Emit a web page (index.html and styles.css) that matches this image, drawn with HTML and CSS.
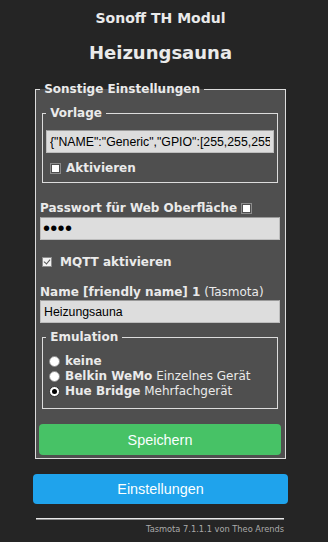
FILE: index.html
```html
<!DOCTYPE html>
<html lang="de">
<head>
    <meta charset="UTF-8">
    <meta name="viewport" content="width=device-width, initial-scale=1.0">
    <title>Sonoff TH Modul - Sonstige Einstellungen</title>
    <link rel="stylesheet" href="styles.css">
</head>
<body>
    <div class="page">
        <div class="head">
            <h3>Sonoff TH Modul</h3>
            <h2>Heizungsauna</h2>
        </div>

        <fieldset class="box">
            <legend>&nbsp;Sonstige Einstellungen&nbsp;</legend>
            <form class="form" action="co" method="get">
                <!-- Vorlage -->
                <fieldset class="sub sub-tpl">
                    <legend>&nbsp;Vorlage&nbsp;</legend>
                    <input class="field tpl-field" name="t1" placeholder="Vorlage" value='{"NAME":"Generic","GPIO":[255,255,255,255,255,255,255,255,255,255,255,255,255],"FLAG":1,"BASE":18}'>
                    <label class="row row-tpl"><input type="checkbox" class="cb"><b>Aktivieren</b></label>
                </fieldset>

                <div class="row row-pw"><b>Passwort für Web Oberfläche</b><input type="checkbox" class="cb cb-pw"></div>
                <input class="field pw-field" type="password" name="wp" value="1234">

                <label class="row row-mqtt"><input type="checkbox" class="cb cb-mqtt" checked><b>MQTT aktivieren</b></label>

                <div class="row row-name"><b>Name [friendly name] 1</b>&nbsp;(Tasmota)</div>
                <input class="field" name="a0" value="Heizungsauna">

                <!-- Emulation -->
                <fieldset class="sub sub-emu">
                    <legend>&nbsp;Emulation&nbsp;</legend>
                    <div class="radios">
                        <label class="radio"><input type="radio" name="b2" value="0" class="rb"><b>keine</b></label>
                        <label class="radio"><input type="radio" name="b2" value="1" class="rb"><b>Belkin WeMo</b>&nbsp;Einzelnes Gerät</label>
                        <label class="radio"><input type="radio" name="b2" value="2" class="rb" checked><b>Hue Bridge</b>&nbsp;Mehrfachgerät</label>
                    </div>
                </fieldset>

                <button type="submit" class="button bgrn">Speichern</button>
            </form>
        </fieldset>

        <button class="button main-btn">Einstellungen</button>

        <div class="footer">
            <hr>
            <a href="#">Tasmota 7.1.1.1 von Theo Arends</a>
        </div>
    </div>
</body>
</html>
```

FILE: styles.css
```css
* {
    box-sizing: border-box;
}

body {
    margin: 0;
    background: #252525;
    color: #eaeaea;
    font-family: "DejaVu Sans", Verdana, sans-serif;
    font-size: 12px;
}

.page {
    width: 255px;
    margin-left: 33px;
    padding-top: 10px;
}

.head {
    text-align: center;
}

.head h3 {
    margin: 0;
    font-size: 14px;
    line-height: 16px;
}

.head h2 {
    margin: 16px 0 0;
    font-size: 18px;
    line-height: 22px;
}

/* fieldsets */
.box {
    margin: 17px 2px 0;
    padding: 0 5px 3px 4px;
    border: 1px solid #dcdcdc;
    background: #4f4f4f;
    min-width: 0;
}

legend {
    padding: 0;
    font-weight: bold;
    line-height: 16px;
}

.form {
    display: flex;
    flex-direction: column;
    margin: 0;
}

.sub {
    margin: 0 2px;
    padding: 0 3px 6px;
    border: 1px solid #dcdcdc;
    min-width: 0;
}

.sub-tpl {
    margin-top: 8px;
}

.sub-emu {
    margin-top: 6px;
    padding-bottom: 9px;
}

/* inputs */
.field {
    display: block;
    width: 100%;
    height: 23px;
    margin: 0;
    padding: 0 3px;
    border: 1px solid #bdbdbd;
    border-top-color: #9a9a9a;
    background: #dddddd;
    color: #000;
    font-family: "Liberation Sans", Arial, sans-serif;
    font-size: 12.3px;
    outline: none;
}

.tpl-field {
    margin-top: 9px;
}

.pw-field {
    margin-top: 1px;
    padding-left: 2px;
    font-size: 20px;
    letter-spacing: 0.3px;
}

.row {
    display: flex;
    align-items: center;
    line-height: 16px;
    height: 16px;
    white-space: nowrap;
}

.row-tpl {
    margin-top: 7px;
}

.row-pw {
    margin-top: 17px;
}

.row-mqtt {
    margin-top: 14px;
}

.row-name {
    margin-top: 14px;
}

/* checkboxes & radios */
.cb {
    appearance: none;
    -webkit-appearance: none;
    flex: none;
    width: 11px;
    height: 11px;
    margin: 0 5px 0 4px;
    border: 1px solid #8c8c8c;
    background: #fff;
    box-shadow: inset 0 0 0 1px #4f4f4f;
    position: relative;
}

.cb-pw {
    margin: 0 0 0 4px;
}

.cb-mqtt {
    width: 10px;
    height: 10px;
    margin: 0 8px 0 2px;
    background: #f2f2f2;
    box-shadow: none;
}

.cb-mqtt:checked::after {
    content: "";
    position: absolute;
    left: 2px;
    top: 0;
    width: 3px;
    height: 5px;
    border: solid #555;
    border-width: 0 1px 1px 0;
    transform: rotate(40deg);
}

.radios {
    display: flex;
    flex-direction: column;
    margin-top: 9px;
}

.radio {
    display: flex;
    align-items: center;
    height: 15px;
    line-height: 15px;
    white-space: nowrap;
}

.rb {
    appearance: none;
    -webkit-appearance: none;
    flex: none;
    width: 11px;
    height: 11px;
    margin: 0 5px 0 3px;
    border: 1px solid #8c8c8c;
    border-radius: 50%;
    background: #fff;
    position: relative;
}

.rb:checked {
    border-color: #333;
}

.rb:checked::after {
    content: "";
    position: absolute;
    left: 2px;
    top: 2px;
    width: 5px;
    height: 5px;
    border-radius: 50%;
    background: #000;
}

/* buttons */
.button {
    display: block;
    width: 100%;
    border: 0;
    border-radius: 4px;
    color: #faffff;
    font-family: "Liberation Sans", Arial, sans-serif;
    font-size: 14.4px;
    cursor: pointer;
}

.bgrn {
    width: auto;
    height: 31px;
    margin: 15px -1px 0;
    background: #47c266;
}

.main-btn {
    height: 30px;
    margin-top: 15px;
    background: #1fa3ec;
}

.footer {
    text-align: right;
    font-size: 8.25px;
}

.footer hr {
    margin: 14px 4px 0 3px;
    border: 0;
    border-top: 1px solid #e8e8e8;
    border-bottom: 1px solid #8a8a8a;
}

.footer a {
    display: block;
    margin: 4px 4px 0 0;
    color: #aaa;
    text-decoration: none;
}
```
